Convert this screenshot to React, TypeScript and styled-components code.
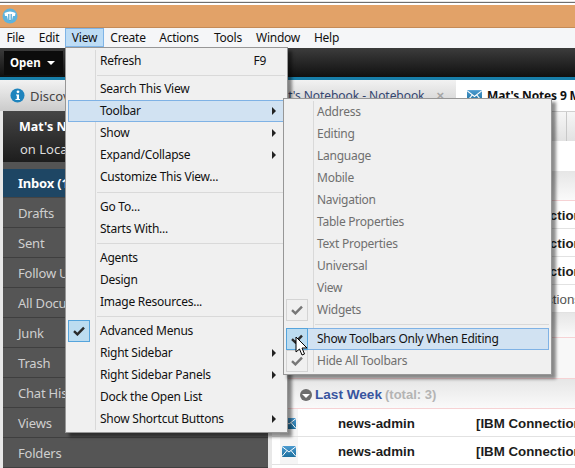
import React from "react";
import styled, { createGlobalStyle } from "styled-components";

const Global = createGlobalStyle`
  html, body { margin: 0; padding: 0; background: #fff; }
  * { box-sizing: border-box; }
`;

const UI = `"Noto Sans", "Liberation Sans", sans-serif`;
const ARIAL = `"Liberation Sans", Arial, sans-serif`;

const Page = styled.div`
  position: relative;
  width: 575px;
  height: 468px;
  overflow: hidden;
  display: flex;
  flex-direction: column;
  background: #fff;
  font-family: ${UI};
`;
const TopStrip = styled.div`
  height: 5px;
  flex: none;
  background: linear-gradient(#fff 0 1px, #e6e6e6 1px 2px, #6e6e6e 2px 3px, #fff 3px);
`;
const TitleBar = styled.div`
  height: 23px;
  flex: none;
  background: #e2a268;
  border-bottom: 1px solid #c58b57;
  display: flex;
  align-items: center;
  padding-left: 2px;
`;
const MenuBar = styled.div`
  height: 20px;
  flex: none;
  display: flex;
  background: #f5f6f8;
  position: relative;
`;
const MenuTitle = styled.div<{ $x: number; $w: number; $open?: boolean }>`
  position: absolute;
  left: ${(p) => p.$x}px;
  top: 0;
  width: ${(p) => p.$w}px;
  height: 19px;
  display: flex;
  align-items: center;
  justify-content: center;
  font-size: 12px;
  letter-spacing: -0.25px;
  color: #111;
  background: ${(p) => (p.$open ? "#bddcf5" : "transparent")};
  border: 1px solid ${(p) => (p.$open ? "#7fb4e6" : "transparent")};
`;
const BlackBar = styled.div`
  height: 29px;
  flex: none;
  background: linear-gradient(#3c3c3c, #101010);
  display: flex;
  align-items: center;
  padding-left: 4px;
`;
const OpenButton = styled.div`
  width: 59px;
  height: 24px;
  background: #0c0c0c;
  color: #fff;
  font-weight: 700;
  font-size: 11.5px;
  display: flex;
  align-items: center;
  gap: 6px;
  padding-left: 6px;
`;
const Caret = styled.span`
  width: 0;
  height: 0;
  border-left: 4px solid transparent;
  border-right: 4px solid transparent;
  border-top: 4px solid #fff;
`;
const TealStrip = styled.div`
  height: 3px;
  flex: none;
  background: #177ea9;
`;
const TabsRow = styled.div`
  height: 31px;
  flex: none;
  display: flex;
  background: linear-gradient(#f2f2f2, #cbcbcb);
`;
const InfoTab = styled.div`
  width: 190px;
  display: flex;
  align-items: center;
  gap: 5px;
  padding-left: 10px;
  font-size: 13px;
  color: #444;
`;
const NoteTab = styled.div`
  width: 266px;
  display: flex;
  align-items: center;
  justify-content: flex-end;
  gap: 12px;
  padding-right: 12px;
  font-size: 12px;
  letter-spacing: -0.05px;
  color: #33456f;
`;
const CloseMark = styled.span`
  color: #a5a5a5;
  font: 700 13px ${ARIAL};
`;
const ActiveTab = styled.div`
  flex: 1;
  background: #fff;
  display: flex;
  align-items: center;
  gap: 5px;
  padding-left: 11px;
  font-weight: 700;
  font-size: 12px;
  letter-spacing: -0.15px;
  color: #111;
  white-space: nowrap;
  overflow: hidden;
`;
const Body = styled.div`
  flex: 1;
  display: flex;
  min-height: 0;
  background: #e8e8e8;
  padding-left: 3px;
`;
const Sidebar = styled.div`
  width: 265px;
  flex: none;
  display: flex;
  flex-direction: column;
  background: #545454;
`;
const AccountHead = styled.div`
  height: 51px;
  flex: none;
  background: linear-gradient(#454545, #1d1d1d);
  color: #fff;
  padding: 7px 0 0 16px;
  display: flex;
  flex-direction: column;
  gap: 4px;
  margin-bottom: 7px;
`;
const AccountName = styled.div`
  font-size: 12.5px;
  font-weight: 700;
  line-height: 18px;
`;
const AccountSub = styled.div`
  font-size: 13px;
  line-height: 18px;
  color: #ddd;
  padding-left: 1px;
`;
const NavItem = styled.div<{ $active?: boolean }>`
  height: ${(p) => (p.$active ? 29 : 30)}px;
  flex: none;
  display: flex;
  align-items: center;
  padding-left: 15px;
  font-size: 13px;
  letter-spacing: -0.2px;
  font-weight: ${(p) => (p.$active ? 700 : 400)};
  color: ${(p) => (p.$active ? "#fff" : "#cfcfcf")};
  background: ${(p) => (p.$active ? "#1e4664" : "#555")};
  border-bottom: 1px solid ${(p) => (p.$active ? "#444" : "#3f3f3f")};
`;
const Main = styled.div`
  flex: 1;
  margin-left: 4px;
  background: #fff;
  display: flex;
  flex-direction: column;
  min-width: 0;
  overflow: hidden;
`;
const ActionBar = styled.div`
  height: 30px;
  flex: none;
  background: linear-gradient(#f6f6f6, #e2e2e2);
  border-top: 1px solid #d0d0d0;
  display: flex;
  justify-content: flex-end;
  align-items: center;
`;
const ActionCell = styled.div`
  width: 9px;
  height: 100%;
  border-left: 1px solid #c8c8c8;
`;
const Blank = styled.div`
  height: 30px;
  flex: none;
  background: #fff;
`;
const Band = styled.div<{ $h: number }>`
  height: ${(p) => p.$h}px;
  flex: none;
  background: linear-gradient(#e6e6e6, #fafafa);
  border-bottom: 1px solid #f6d2d4;
  display: flex;
  align-items: center;
  padding: 2px 0 0 28px;
  gap: 3px;
`;
const Spacer = styled.div`
  height: 41px;
  flex: none;
  background: #f8f8f8;
  border-bottom: 1px solid #f6d2d4;
`;
const GroupIcon = styled.span`
  width: 12px;
  height: 12px;
  border-radius: 50%;
  background: #6d6d6d;
  display: flex;
  align-items: center;
  justify-content: center;
  &::after {
    content: "";
    border-left: 4px solid transparent;
    border-right: 4px solid transparent;
    border-top: 4px solid #fff;
    margin-top: 2px;
  }
`;
const GroupName = styled.span`
  font: 700 13.6px ${ARIAL};
  color: #39559f;
`;
const GroupCount = styled.span`
  font: 700 13px ${ARIAL};
  color: #b4b4b4;
`;
const DocRow = styled.div<{ $plain?: boolean }>`
  height: 28px;
  flex: none;
  display: grid;
  grid-template-columns: 8px 18px 40px 138px 1fr;
  align-items: center;
  border-bottom: 1px solid #e2e2e2;
  font: ${(p) => (p.$plain ? 400 : 700)} 13.3px ${ARIAL};
  color: ${(p) => (p.$plain ? "#555" : "#1c1c1c")};
  white-space: nowrap;
  overflow: hidden;
`;
const IconCell = styled.span`
  grid-column: 2;
  height: 28px;
  background: #f5f5f5;
  display: flex;
  align-items: center;
  padding-left: 2px;
`;
const NameCell = styled.span`
  grid-column: 4;
`;
const SubjectCell = styled.span`
  grid-column: 5;
`;

const Menu = styled.div<{ $x: number; $y: number; $w: number; $h: number; $indent: number }>`
  --indent: ${(p) => p.$indent}px;
  position: absolute;
  left: ${(p) => p.$x}px;
  top: ${(p) => p.$y}px;
  width: ${(p) => p.$w}px;
  height: ${(p) => p.$h}px;
  background: #f0f0f0;
  border: 1px solid #979797;
  box-shadow: 4px 4px 3px rgba(0, 0, 0, 0.45);
  padding: 2px;
  display: flex;
  flex-direction: column;
  &::before {
    content: "";
    position: absolute;
    left: 29px;
    top: 2px;
    bottom: 2px;
    width: 1px;
    background: #d9d9d9;
  }
`;
const Item = styled.div<{ $hot?: boolean; $off?: boolean }>`
  position: relative;
  height: 22px;
  flex: none;
  display: flex;
  align-items: center;
  padding: 0 10px 2px var(--indent);
  font-size: 12px;
  letter-spacing: -0.25px;
  white-space: nowrap;
  color: ${(p) => (p.$off ? "#6f6f6f" : "#111")};
  background: ${(p) => (p.$hot ? "#d1e2f2" : "transparent")};
  outline: ${(p) => (p.$hot ? "1px solid #7fb2e5" : "none")};
  outline-offset: -1px;
`;
const Shortcut = styled.span`
  margin-left: auto;
  margin-right: 9px;
`;
const Arrow = styled.span`
  margin-left: auto;
  margin-right: -1px;
  margin-top: 2px;
  width: 0;
  height: 0;
  border-top: 4px solid transparent;
  border-bottom: 4px solid transparent;
  border-left: 4px solid #222;
`;
const CheckBox = styled.span<{ $on?: boolean; $off?: boolean }>`
  position: absolute;
  left: 0;
  top: 0;
  width: 22px;
  height: 22px;
  display: flex;
  align-items: center;
  justify-content: center;
  background: ${(p) => (p.$on ? "#bcdcf0" : "transparent")};
  border: 1px solid ${(p) => (p.$on ? "#55a4dc" : "#d4d4d4")};
  color: ${(p) => (p.$off ? "#777" : "#2a2a2a")};
`;
const Separator = styled.div<{ $h?: number }>`
  height: ${(p) => p.$h ?? 7}px;
  flex: none;
  display: flex;
  align-items: center;
  padding-left: 29px;
  &::after {
    content: "";
    flex: 1;
    height: 1px;
    background: #d9d9d9;
  }
`;
const Pointer = styled.svg`
  position: absolute;
  left: 295px;
  top: 336px;
`;

const Check = () => (
  <svg width="12" height="10" viewBox="0 0 12 10">
    <path d="M1 5.2 L4.4 8.4 L11 1.6" fill="none" stroke="currentColor" strokeWidth="2.4" />
  </svg>
);

const Envelope = ({ w = 14, h = 11 }: { w?: number; h?: number }) => (
  <svg width={w} height={h} viewBox="0 0 14 11" style={{ flex: "none" }}>
    <defs>
      <linearGradient id="env" x1="0" y1="0" x2="0" y2="1">
        <stop offset="0" stopColor="#4c9bd0" />
        <stop offset="1" stopColor="#1c6f9e" />
      </linearGradient>
    </defs>
    <rect width="14" height="11" fill="url(#env)" />
    <path d="M0 0.5 L7 6 L14 0.5 M0 10.5 L5 4.5 M14 10.5 L9 4.5" stroke="#fff" strokeWidth="1" fill="none" />
  </svg>
);

const Logo = () => (
  <svg width="16" height="16" viewBox="0 0 16 16">
    <circle cx="8" cy="8" r="7.5" fill="#5fb3dd" />
    <path d="M2.5 5 Q8 2 13.5 5 L13 8 L11 8 L10 12 L6 12 L5 8 L3 8 Z" fill="#fff" />
    <path d="M6.5 6 V12 M8 6 V13 M9.5 6 V12" stroke="#4aa2d0" strokeWidth="0.8" />
  </svg>
);

const Info = () => (
  <svg width="15" height="15" viewBox="0 0 15 15" style={{ flex: "none" }}>
    <circle cx="7.5" cy="7.5" r="7" fill="#1f84bd" />
    <circle cx="8" cy="3.8" r="1.4" fill="#fff" />
    <path d="M6 6.5 H9 V11 H10 V12 H5.5 V11 H6.8 V7.5 H6 Z" fill="#fff" />
  </svg>
);

const titles: [string, number, number, boolean?][] = [
  ["File", 0, 31],
  ["Edit", 33, 32],
  ["View", 65, 39, true],
  ["Create", 104, 48],
  ["Actions", 152, 54],
  ["Tools", 206, 44],
  ["Window", 250, 56],
  ["Help", 307, 39],
];

const nav = ["Drafts", "Sent", "Follow Up", "All Documents", "Junk", "Trash", "Chat History", "Views", "Folders"];

const subject = "[IBM Connections";

export default function App() {
  return (
    <Page>
      <Global />
      <TopStrip />
      <TitleBar>
        <Logo />
      </TitleBar>
      <MenuBar>
        {titles.map(([t, x, w, open]) => (
          <MenuTitle key={t} $x={x} $w={w} $open={open}>
            {t}
          </MenuTitle>
        ))}
      </MenuBar>
      <BlackBar>
        <OpenButton>
          Open <Caret />
        </OpenButton>
      </BlackBar>
      <TealStrip />
      <TabsRow>
        <InfoTab>
          <Info />
          Discover
        </InfoTab>
        <NoteTab>
          Mat's Notebook - Notebook
          <CloseMark>×</CloseMark>
        </NoteTab>
        <ActiveTab>
          <Envelope w={15} h={12} />
          Mat's Notes 9 Mail
        </ActiveTab>
      </TabsRow>
      <Body>
        <Sidebar>
          <AccountHead>
            <AccountName>Mat's Notes</AccountName>
            <AccountSub>on Local</AccountSub>
          </AccountHead>
          <NavItem $active>Inbox (1)</NavItem>
          {nav.map((n) => (
            <NavItem key={n}>{n}</NavItem>
          ))}
        </Sidebar>
        <Main>
          <ActionBar>
            <ActionCell />
          </ActionBar>
          <Blank />
          <Band $h={30} />
          {[0, 1, 2].map((i) => (
            <DocRow key={i}>
              <IconCell />
              <NameCell>news-admin</NameCell>
              <SubjectCell>{subject}</SubjectCell>
            </DocRow>
          ))}
          <DocRow $plain>
            <IconCell />
            <SubjectCell>{subject}</SubjectCell>
          </DocRow>
          <Band $h={25} />
          <Spacer />
          <Band $h={30}>
            <GroupIcon />
            <GroupName>Last Week</GroupName>
            <GroupCount>(total: 3)</GroupCount>
          </Band>
          {[0, 1].map((i) => (
            <DocRow key={i}>
              <IconCell>
                <Envelope />
              </IconCell>
              <NameCell>news-admin</NameCell>
              <SubjectCell>{subject}</SubjectCell>
            </DocRow>
          ))}
        </Main>
      </Body>

      <Menu $x={65} $y={47} $w={223} $h={386} $indent={32}>
        <Item>
          Refresh<Shortcut>F9</Shortcut>
        </Item>
        <Separator $h={6} />
        <Item>Search This View</Item>
        <Item $hot>
          Toolbar
          <Arrow />
        </Item>
        <Item>
          Show
          <Arrow />
        </Item>
        <Item>
          Expand/Collapse
          <Arrow />
        </Item>
        <Item>Customize This View...</Item>
        <Separator $h={8} />
        <Item>Go To...</Item>
        <Item>Starts With...</Item>
        <Separator />
        <Item>Agents</Item>
        <Item>Design</Item>
        <Item>Image Resources...</Item>
        <Separator />
        <Item>
          <CheckBox $on>
            <Check />
          </CheckBox>
          Advanced Menus
        </Item>
        <Item>
          Right Sidebar
          <Arrow />
        </Item>
        <Item>
          Right Sidebar Panels
          <Arrow />
        </Item>
        <Item>Dock the Open List</Item>
        <Item>
          Show Shortcut Buttons
          <Arrow />
        </Item>
      </Menu>

      <Menu $x={283} $y={98} $w={269} $h={277} $indent={31}>
        {["Address", "Editing", "Language", "Mobile", "Navigation", "Table Properties", "Text Properties", "Universal", "View"].map((t) => (
          <Item key={t} $off>
            {t}
          </Item>
        ))}
        <Item $off>
          <CheckBox $off>
            <Check />
          </CheckBox>
          Widgets
        </Item>
        <Separator />
        <Item $hot>
          <CheckBox $on>
            <Check />
          </CheckBox>
          Show Toolbars Only When Editing
        </Item>
        <Item $off>
          <CheckBox $off>
            <Check />
          </CheckBox>
          Hide All Toolbars
        </Item>
      </Menu>

      <Pointer width="13" height="21" viewBox="0 0 13 21">
        <path d="M1 1 L1 16 L4.5 13 L7 19 L9.5 18 L7 12 L12 12 Z" fill="#fff" stroke="#000" strokeWidth="1" />
      </Pointer>
    </Page>
  );
}
